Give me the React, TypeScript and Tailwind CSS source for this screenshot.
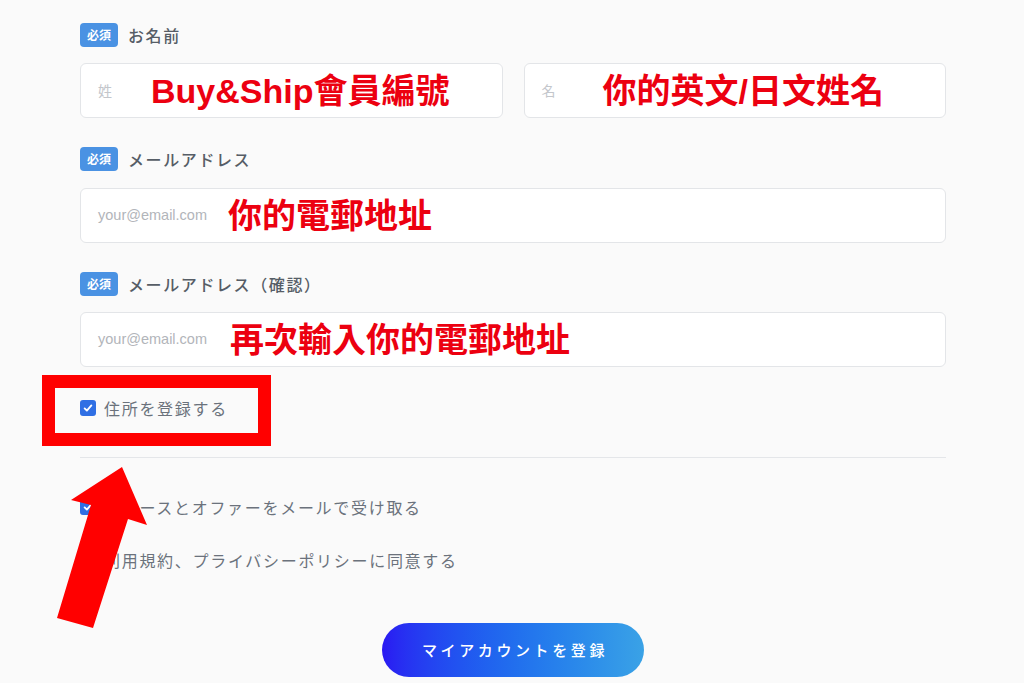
import React from 'react';

const jp = "font-['Noto_Sans_CJK_JP',sans-serif]";
const note = "font-['Liberation_Sans','Noto_Sans_CJK_TC',sans-serif] font-bold text-[34px] leading-none text-[#ec0010]";

// 必須バッジ付きラベル
function FieldLabel({ text }: { text: string }) {
  return (
    <div className="flex h-6 items-center gap-[10px]">
      <span className={`${jp} flex h-6 w-[38px] items-center justify-center rounded-[4px] bg-[#4a92e3] text-[12px] font-bold text-white`}>
        必須
      </span>
      <span className={`${jp} text-[16px] font-medium tracking-[1.6px] text-[#565d66]`}>{text}</span>
    </div>
  );
}

function Box({ children }: { children: React.ReactNode }) {
  return (
    <div className="flex h-[55px] items-center rounded-[6px] border border-[#e3e5e8] bg-white pl-[17px]">
      {children}
    </div>
  );
}

function CheckBox({ checked }: { checked: boolean }) {
  return checked ? (
    <span className="flex h-4 w-4 items-center justify-center rounded-[3px] bg-[#2f6fe4]">
      <svg viewBox="0 0 16 16" className="h-3 w-3">
        <polyline points="3.5,8.5 6.5,11.5 12.5,4.5" fill="none" stroke="white" strokeWidth="2.4" strokeLinecap="round" strokeLinejoin="round" />
      </svg>
    </span>
  ) : (
    <span className="h-4 w-4 rounded-[3px] border border-[#9aa1aa] bg-white" />
  );
}

function CheckRow({ text, checked }: { text: string; checked: boolean }) {
  return (
    <label className="flex h-5 items-center gap-2">
      <CheckBox checked={checked} />
      <span className={`${jp} text-[16px] tracking-[1.7px] text-[#6b727c]`}>{text}</span>
    </label>
  );
}

export default function App() {
  return (
    <div className="min-h-screen bg-[#fafafa]">
      <div className="relative ml-[80px] w-[866px] pt-[23px]">
        {/* お名前 */}
        <FieldLabel text="お名前" />
        <div className="mt-4 grid grid-cols-2 gap-[21px]">
          <Box>
            <span className={`${jp} text-[14px] text-[#c3c6cb]`}>姓</span>
            <span className={`${note} ml-[39px]`}>Buy&Ship會員編號</span>
          </Box>
          <Box>
            <span className={`${jp} text-[14px] text-[#c3c6cb]`}>名</span>
            <span className={`${note} ml-[47px]`}>你的英文/日文姓名</span>
          </Box>
        </div>

        {/* メールアドレス */}
        <div className="mt-[29px]">
          <FieldLabel text="メールアドレス" />
        </div>
        <div className="mt-[17px]">
          <Box>
            <span className="font-['Liberation_Sans',sans-serif] text-[14.5px] text-[#b2b5ba]">your@email.com</span>
            <span className={`${note} ml-[21px]`}>你的電郵地址</span>
          </Box>
        </div>

        {/* メールアドレス（確認） */}
        <div className="mt-[29px]">
          <FieldLabel text="メールアドレス（確認）" />
        </div>
        <div className="mt-4">
          <Box>
            <span className="font-['Liberation_Sans',sans-serif] text-[14.5px] text-[#b2b5ba]">your@email.com</span>
            <span className={`${note} ml-[23px]`}>再次輸入你的電郵地址</span>
          </Box>
        </div>

        <div className="mt-[31px]">
          <CheckRow text="住所を登録する" checked />
        </div>

        <div className="mt-[39px] border-t border-[#e4e6e9]" />

        <div className="mt-[39px]">
          <CheckRow text="ニュースとオファーをメールで受け取る" checked />
        </div>
        <div className="mt-[33px]">
          <CheckRow text="利用規約、プライバシーポリシーに同意する" checked={false} />
        </div>

        <div className="mt-[53px] flex justify-center">
          <button className={`${jp} h-[54px] w-[262px] rounded-full bg-gradient-to-r from-[#2a17f2] to-[#3aa2e6] pl-1 text-[15px] font-medium tracking-[3.6px] text-white`}>
            マイアカウントを登録
          </button>
        </div>

        {/* 注釈: 赤枠 */}
        <div className="absolute left-[-38px] top-[375px] h-[71px] w-[229px] border-[13px] border-[#ff0000]" />

        {/* 注釈: 矢印 */}
        <svg viewBox="40 460 120 175" className="absolute left-[-40px] top-[460px] h-[175px] w-[120px]">
          <polygon points="122,467 147,525 128,519 93,628 57,618 91,505 71,500" fill="#ff0000" />
        </svg>
      </div>
    </div>
  );
}
